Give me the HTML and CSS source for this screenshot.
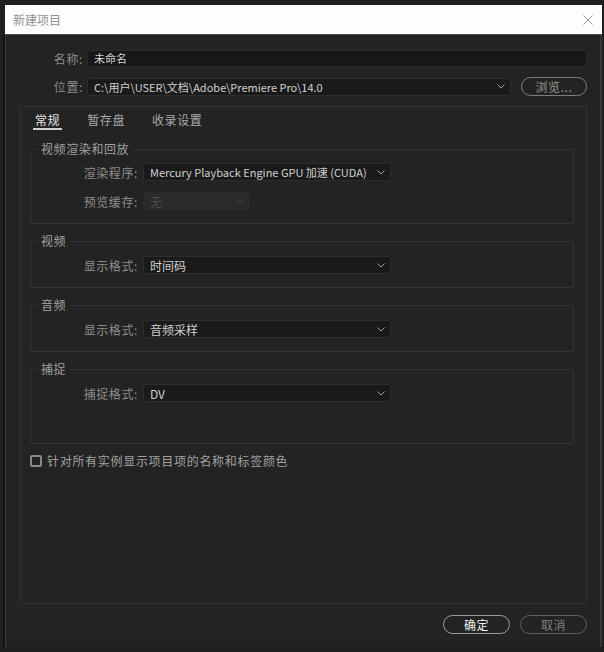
FILE: index.html
```html
<!DOCTYPE html>
<html lang="zh-CN">
<head>
    <meta charset="UTF-8">
    <title>新建项目</title>
    <link rel="stylesheet" href="styles.css">
</head>
<body>
    <div class="window">
        <div class="titlebar">
            <span class="title">新建项目</span>
            <svg class="close" width="10" height="10" viewBox="0 0 10 10">
                <path d="M0.5 0.5 L9.5 9.5 M9.5 0.5 L0.5 9.5" stroke="#9a9a9a" stroke-width="1" fill="none"/>
            </svg>
        </div>
        <div class="content">
            <div class="form">
                <label class="form-label">名称:</label>
                <div class="field field-name">未命名</div>
                <label class="form-label">位置:</label>
                <div class="select select-path">
                    <span>C:\用户\USER\文档\Adobe\Premiere Pro\14.0</span>
                    <svg class="chevron" width="8" height="5" viewBox="0 0 8 5"><polyline points="0.5,0.5 4,4 7.5,0.5" stroke="#a0a0a0" fill="none"/></svg>
                </div>
                <button class="pill browse">浏览...</button>
            </div>

            <div class="panel">
                <div class="tabs">
                    <span class="tab active">常规</span>
                    <span class="tab">暂存盘</span>
                    <span class="tab">收录设置</span>
                </div>

                <fieldset class="group">
                    <legend>视频渲染和回放</legend>
                    <div class="group-row">
                        <span class="group-label">渲染程序:</span>
                        <div class="select select-small">
                            <span>Mercury Playback Engine GPU 加速 (CUDA)</span>
                            <svg class="chevron" width="8" height="5" viewBox="0 0 8 5"><polyline points="0.5,0.5 4,4 7.5,0.5" stroke="#a0a0a0" fill="none"/></svg>
                        </div>
                    </div>
                    <div class="group-row">
                        <span class="group-label">预览缓存:</span>
                        <div class="select select-disabled">
                            <span>无</span>
                            <svg class="chevron" width="8" height="5" viewBox="0 0 8 5"><polyline points="0.5,0.5 4,4 7.5,0.5" stroke="#4a4a4a" fill="none"/></svg>
                        </div>
                    </div>
                </fieldset>

                <fieldset class="group">
                    <legend>视频</legend>
                    <div class="group-row">
                        <span class="group-label">显示格式:</span>
                        <div class="select">
                            <span>时间码</span>
                            <svg class="chevron" width="8" height="5" viewBox="0 0 8 5"><polyline points="0.5,0.5 4,4 7.5,0.5" stroke="#a0a0a0" fill="none"/></svg>
                        </div>
                    </div>
                </fieldset>

                <fieldset class="group">
                    <legend>音频</legend>
                    <div class="group-row">
                        <span class="group-label">显示格式:</span>
                        <div class="select">
                            <span>音频采样</span>
                            <svg class="chevron" width="8" height="5" viewBox="0 0 8 5"><polyline points="0.5,0.5 4,4 7.5,0.5" stroke="#a0a0a0" fill="none"/></svg>
                        </div>
                    </div>
                </fieldset>

                <fieldset class="group group-capture">
                    <legend>捕捉</legend>
                    <div class="group-row">
                        <span class="group-label">捕捉格式:</span>
                        <div class="select">
                            <span>DV</span>
                            <svg class="chevron" width="8" height="5" viewBox="0 0 8 5"><polyline points="0.5,0.5 4,4 7.5,0.5" stroke="#a0a0a0" fill="none"/></svg>
                        </div>
                    </div>
                </fieldset>

                <label class="check">
                    <span class="box"></span>
                    <span>针对所有实例显示项目项的名称和标签颜色</span>
                </label>
            </div>

            <div class="footer">
                <button class="pill primary">确定</button>
                <button class="pill cancel">取消</button>
            </div>
        </div>
    </div>
</body>
</html>
```

FILE: styles.css
```css
body {
    margin: 0;
    background-color: #1f1f1f;
    font-family: "Noto Sans CJK SC", "Noto Sans", sans-serif;
    font-size: 12px;
    color: #a0a0a0;
}

.window {
    margin: 5px 0 0 5px;
    width: 597px;
    height: 642px;
    display: flex;
    flex-direction: column;
}

.titlebar {
    height: 29px;
    background: #fdfdfd;
    border-bottom: 1px solid #4a4a4a;
    display: flex;
    align-items: center;
    justify-content: space-between;
    padding: 0 9px 0 8px;
}

.title {
    color: #929292;
    font-size: 12px;
}

.close {
    display: block;
}

.content {
    flex: 1;
    background: #232323;
    border-left: 1px solid #3a3a3a;
    border-right: 2px solid #363636;
    display: flex;
    flex-direction: column;
    padding: 15px 13px 13px 0;
    box-shadow: -2px 0 0 #141414;
}

/* top form */
.form {
    display: grid;
    grid-template-columns: 81px 1fr 66px;
    row-gap: 10px;
    align-items: center;
}

.form-label {
    text-align: right;
    padding-right: 4px;
    color: #8c8c8c;
    letter-spacing: 0.6px;
    line-height: 16px;
}

.field {
    grid-column: 2 / 4;
    height: 17px;
    box-sizing: border-box;
    background: #171717;
    border: 1px solid #2b2b2b;
    border-radius: 3px;
    padding-left: 6px;
    color: #d4d4d4;
    font-size: 11px;
    line-height: 15px;
}

.select {
    height: 18px;
    box-sizing: border-box;
    background: #1a1a1a;
    border: 1px solid #2d2d2d;
    border-radius: 3px;
    display: flex;
    align-items: center;
    justify-content: space-between;
    padding: 0 5px 0 6px;
    color: #d0d0d0;
    font-size: 12px;
    white-space: nowrap;
}

.select-path {
    margin-right: 10px;
    font-size: 11px;
}

.select-small {
    font-size: 11px;
}

.chevron {
    display: block;
    flex-shrink: 0;
}

.pill {
    height: 19px;
    box-sizing: border-box;
    border-radius: 10px;
    background: transparent;
    border: 1.5px solid #7e7e7e;
    color: #969696;
    font-family: "Noto Sans CJK SC", "Noto Sans", sans-serif;
    font-size: 12px;
    letter-spacing: 0.6px;
    padding: 0;
    line-height: 15px;
}

/* panel */
.panel {
    flex: 1;
    margin: 10px 0 0 14px;
    border: 1px solid #313131;
    padding: 5px 12px 0 9px;
}

.tabs {
    display: flex;
    gap: 23px;
    margin-left: 3px;
}

.tab {
    padding: 0 2px;
    line-height: 16px;
    font-size: 12px;
    letter-spacing: 0.6px;
    color: #aaaaaa;
    border-bottom: 2px solid transparent;
}

.tab.active {
    color: #e2e2e2;
    border-bottom-color: #cfcfcf;
}

.group {
    margin: 9px 0 0 0;
    padding: 7px 0 13px 0;
    border: 1px solid #343434;
    border-radius: 2px;
    display: flex;
    flex-direction: column;
    gap: 11px;
}

.tabs + .group {
    margin-top: 11px;
    padding-top: 6px;
}

.group legend {
    margin-left: 6px;
    padding: 0 4px;
    line-height: 16px;
    letter-spacing: 0.6px;
    color: #a2a2a2;
}

.group-capture {
    padding-bottom: 41px;
}

.group-row {
    display: flex;
    align-items: center;
    gap: 5px;
}

.group-label {
    width: 107px;
    text-align: right;
    letter-spacing: 0.6px;
    color: #8e8e8e;
}

.group-row .select {
    width: 248px;
}

.group-row .select-disabled {
    width: 107px;
    background: #2a2a2a;
    border-color: #2a2a2a;
    color: #4c4c4c;
}

.check {
    display: flex;
    align-items: center;
    gap: 5px;
    margin-top: 9px;
    line-height: 16px;
    letter-spacing: 0.7px;
    color: #a2a2a2;
}

.box {
    width: 12px;
    height: 12px;
    box-sizing: border-box;
    border: 2px solid #8a8a8a;
    border-radius: 2px;
}

/* footer buttons */
.footer {
    display: flex;
    justify-content: flex-end;
    gap: 10px;
    margin-top: 11px;
}

.footer .pill {
    width: 67px;
}

.primary {
    border-color: #9c9c9c;
    color: #f0f0f0;
}

.cancel {
    border-color: #5e5e5e;
    color: #808080;
}
```
